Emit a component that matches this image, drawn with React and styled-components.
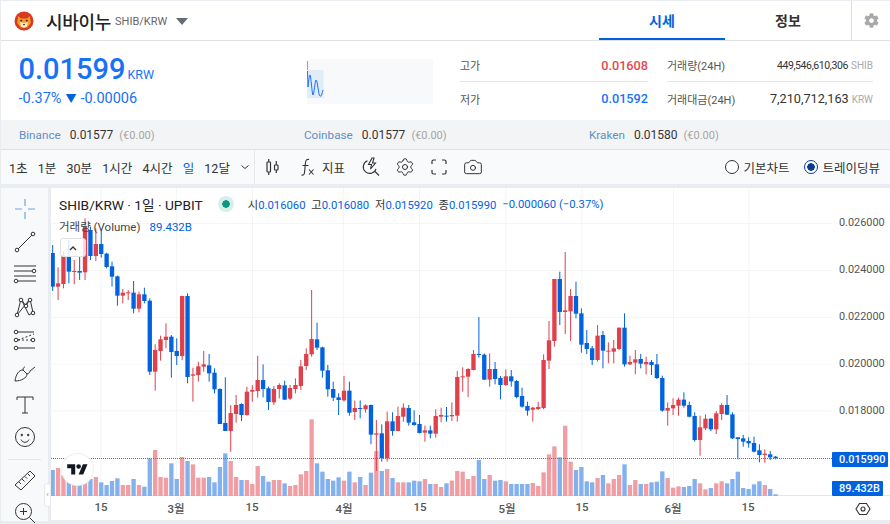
import React from "react";
import styled, { createGlobalStyle } from "styled-components";
import { Settings, Camera } from "lucide-react";
import { FaCog } from "react-icons/fa";

const GlobalStyle = createGlobalStyle`
  html, body { margin: 0; padding: 0; background: #fff; overflow: hidden; }
  * { box-sizing: border-box; }
  body { font-family: Roboto, "Noto Sans CJK KR", sans-serif; color: #333; }
`;

const BLUE = "#0062df";
const RED = "#e0404a";

// [red?, wickTop, bodyTop, bodyBottom, wickBottom, volumeTop]
const candles = [
  [0,180,204,305,318,855],[1,247,295,305,345,849],[1,200,212,297,310,870],[0,165,215,260,295,890],
  [1,225,258,261,298,900],[0,215,258,263,285,900],[1,100,125,262,285,885],[0,125,135,213,225,882],
  [1,130,177,213,228,876],[0,135,177,207,218,892],[0,203,206,246,250,900],[0,230,244,275,305,888],
  [0,272,274,332,362,880],[1,312,323,332,355,900],[1,315,322,325,345,900],[0,288,323,371,385,882],
  [1,320,328,371,382,900],[0,308,328,348,355,905],[0,340,347,560,570,820],[1,478,495,560,617,795],
  [1,452,463,498,527,876],[1,415,455,465,490,878],[0,450,455,501,578,835],[0,460,498,513,540,882],
  [1,332,333,513,525,816],[0,325,333,576,595,828],[1,548,568,572,650,838],[1,530,544,570,590,878],
  [1,498,538,545,560,878],[0,507,541,565,590,876],[0,550,563,613,625,892],[0,610,612,717,717,846],
  [0,577,714,738,738,805],[1,660,684,738,800,828],[1,630,660,687,713,876],[0,655,657,690,708,885],
  [1,605,620,690,692,885],[1,600,615,620,650,897],[1,512,585,618,638,843],[0,538,585,612,637,873],
  [0,605,610,651,675,890],[1,603,612,652,660,885],[1,595,600,612,640,885],[0,587,601,644,645,895],
  [1,600,609,641,645,903],[1,580,600,612,625,900],[1,525,544,603,615,868],[1,490,507,543,555,858],
  [1,315,462,508,515,703],[0,413,463,488,495,835],[0,485,487,557,578,860],[0,540,556,613,635,882],
  [0,590,612,638,648,887],[0,625,637,645,690,877],[1,573,617,646,650,887],[0,590,617,683,692,860],
  [1,647,669,681,705,892],[0,646,669,671,700,876],[1,658,661,673,683,900],[0,659,660,749,778,863],
  [1,705,745,749,858,798],[0,718,745,820,830,858],[1,680,709,820,830,852],[0,682,709,738,752,879],
  [1,665,693,738,738,892],[1,655,668,695,710,892],[0,660,669,713,722,892],[0,676,712,720,722,887],
  [0,690,717,744,745,889],[1,722,736,743,770,882],[0,722,736,746,760,897],[1,673,693,746,758,897],
  [1,668,690,695,712,906],[0,666,692,695,710,895],[1,652,690,694,708,887],[1,558,576,692,710,858],
  [1,547,574,576,620,860],[1,550,552,575,636,882],[1,495,507,555,556,873],[0,396,507,510,518,825],
  [0,505,509,584,585,882],[1,505,552,584,605,870],[0,531,552,582,598,887],[0,573,579,600,643,885],
  [1,553,574,600,603,889],[0,555,574,589,605,897],[0,585,588,636,640,897],[0,608,633,665,668,897],
  [0,650,663,677,692,897],[1,665,668,674,710,894],[1,650,666,672,675,903],[1,508,525,669,673,862],
  [1,408,466,527,552,808],[1,282,282,468,485,784],[0,260,282,381,420,817],[1,201,376,381,447,722],
  [1,312,333,379,468,830],[0,290,333,386,400,855],[0,370,385,479,503,846],[0,435,474,492,507,889],
  [0,483,490,525,540,892],[1,420,452,525,530,879],[0,438,450,497,550,870],[1,472,497,500,535,895],
  [1,465,490,500,535,882],[1,428,428,492,495,870],[0,385,428,538,545,838],[1,512,531,538,540,900],
  [1,495,523,533,568,885],[0,507,522,536,550,897],[1,515,531,538,568,897],[0,525,531,540,570,892],
  [0,507,538,579,582,890],[0,572,579,677,680,859],[1,652,669,677,722,879],[1,640,660,670,690,908],
  [1,638,644,662,692,904],[0,622,644,662,668,906],[0,650,660,695,697,903],[0,682,693,765,770,882],
  [1,692,727,765,812,895],[1,688,701,730,735,913],[0,700,701,733,738,909],[1,678,685,733,747,895],
  [1,655,660,687,705,889],[0,630,660,689,690,895],[0,682,688,760,762,882],[0,757,757,762,823,860],
  [0,750,760,770,785,909],[0,757,768,775,788,912],[0,755,774,800,802,898],[0,778,796,810,832,889],
  [1,793,806,810,833,900],[0,798,808,817,825,912],[0,813,815,820,823,928],
];

const gridYs = [115, 256, 397, 537, 677];
const gridXs = [302, 529, 757, 1030, 1258, 1517, 1745, 2020, 2246];
const prices = ["0.026000", "0.024000", "0.022000", "0.020000", "0.018000"];
const timeLabels = [
  ["15", 50], ["3월", 125], ["15", 201], ["4월", 293], ["15", 369],
  ["5월", 456], ["15", 531], ["6월", 622], ["15", 697],
];
const intervals = ["1초", "1분", "30분", "1시간", "4시간", "일", "12달"];
const exchanges = [
  ["Binance", "0.01577"],
  ["Coinbase", "0.01577"],
  ["Kraken", "0.01580"],
];

const Page = styled.div`
  width: 890px;
  height: 524px;
  display: flex;
  flex-direction: column;
  background: #e9ecf1;
  padding: 1px 0 0 1px;
  overflow: hidden;
`;

const Header = styled.header`
  height: 40px;
  display: flex;
  align-items: center;
  background: #fff;
  border-bottom: 1px solid #dfe1e5;
  flex: none;
`;

const Brand = styled.div`
  display: flex;
  align-items: center;
  width: 598px;
  padding-left: 13px;
  flex: none;
`;

const CoinName = styled.span`
  margin-left: 12px;
  font-size: 18px;
  font-weight: 500;
  letter-spacing: -0.3px;
  color: #222;
`;

const Pair = styled.span`
  margin-left: 4px;
  margin-top: 1px;
  font-size: 11px;
  color: #666;
`;

const Caret = styled.span`
  margin-left: 9px;
  margin-top: 2px;
  border-left: 6px solid transparent;
  border-right: 6px solid transparent;
  border-top: 7px solid #666b75;
`;

const Tab = styled.div`
  width: 126px;
  height: 39px;
  display: flex;
  align-items: center;
  justify-content: center;
  font-size: 14px;
  font-weight: 700;
  color: ${(p) => (p.$active ? BLUE : "#333")};
  border-bottom: 2px solid ${(p) => (p.$active ? BLUE : "transparent")};
`;

const GearCell = styled.div`
  width: 39px;
  height: 39px;
  display: flex;
  align-items: center;
  justify-content: center;
  border-left: 1px solid #dfe1e5;
  color: #a9a9a9;
`;

const Summary = styled.section`
  height: 79px;
  display: flex;
  background: #fff;
  flex: none;
`;

const PriceBlock = styled.div`
  width: 306px;
  padding: 9px 0 0 17.5px;
  flex: none;
`;

const MainPrice = styled.div`
  display: flex;
  align-items: baseline;
  color: #1772f8;
  font-size: 29px;
  font-weight: 500;
  line-height: 38px;
  span {
    font-size: 12.5px;
    font-weight: 400;
    margin-left: 2px;
  }
`;

const Change = styled.div`
  margin-top: -4px;
  font-size: 14.5px;
  line-height: 18px;
  color: #1772f8;
  b {
    font-weight: 400;
    font-size: 11px;
    color: ${BLUE};
    margin: 0 4px;
  }
`;

const Spark = styled.div`
  width: 126px;
  height: 45px;
  margin-top: 18px;
  background: #f8f9fb;
  flex: none;
  svg { display: block; }
`;

const Stats = styled.div`
  display: grid;
  grid-template-columns: 188px 206px;
  column-gap: 19px;
  margin: 8px 0 0 27px;
  align-content: start;
`;

const StatRow = styled.div`
  height: 33px;
  display: flex;
  align-items: center;
  justify-content: space-between;
  border-bottom: ${(p) => (p.$line ? "1px solid #e4e6ea" : "none")};
  font-size: 11px;
  color: #555;
`;

const StatValue = styled.span`
  font-size: ${(p) => p.$size || 12.7}px;
  font-weight: ${(p) => (p.$color ? 500 : 400)};
  color: ${(p) => p.$color || "#333"};
  letter-spacing: ${(p) => (p.$size ? "-0.4px" : "0")};
`;

const Unit = styled.small`
  margin-left: 3px;
  font-size: 10px;
  color: #aaa;
`;

const ExchangeBar = styled.div`
  height: 30px;
  display: flex;
  align-items: center;
  padding-left: 18px;
  background: #f3f4f6;
  border-bottom: 1px solid #dfe1e5;
  flex: none;
`;

const Exchange = styled.div`
  width: 285px;
  display: flex;
  align-items: baseline;
  gap: 9px;
  font-size: 12px;
`;

const ExName = styled.span`
  color: #5f8fc6;
  font-size: 11.7px;
`;

const ExValue = styled.span`
  color: #333;
`;

const ExDiff = styled.span`
  color: #a5a5a5;
  font-size: 11px;
  margin-left: -3px;
`;

const Toolbar = styled.div`
  height: 34px;
  display: flex;
  align-items: center;
  background: #f9fafc;
  flex: none;
`;

const Intervals = styled.div`
  width: 254px;
  height: 100%;
  display: flex;
  align-items: center;
  gap: 10.2px;
  padding-left: 8px;
  border-right: 1px solid #e6e8ec;
  white-space: nowrap;
  flex: none;
`;

const Interval = styled.span`
  font-size: 12.5px;
  color: ${(p) => (p.$active ? BLUE : "#333")};
`;

const ToolIcons = styled.div`
  display: flex;
  align-items: center;
  padding-left: 10px;
  color: #333;
  flex: 1;
`;

const ToolSlot = styled.span`
  display: flex;
  align-items: center;
  gap: ${(p) => p.$gap || 0}px;
  margin-right: ${(p) => p.$mr || 0}px;
  font-size: 12.5px;
`;

const ChartModes = styled.div`
  display: flex;
  align-items: center;
  gap: 15px;
  margin-right: 10px;
`;

const ChartMode = styled.label`
  display: flex;
  align-items: center;
  gap: 4px;
  font-size: 12.5px;
  color: #333;
`;

const Radio = styled.span`
  width: 14px;
  height: 14px;
  border-radius: 50%;
  border: 1.3px solid ${(p) => (p.$on ? "#0a3d91" : "#333")};
  background: ${(p) => (p.$on ? "radial-gradient(circle, #0a3d91 0 3.5px, #fff 4px)" : "#fff")};
`;

const ChartRegion = styled.div`
  margin-top: 4px;
  height: 333px;
  display: flex;
  flex: none;
`;

const DrawingTools = styled.aside`
  position: relative;
  width: 47px;
  background: #f8f9fb;
  display: flex;
  flex-direction: column;
  align-items: center;
  flex: none;
  color: #333;
  padding-top: 5px;
`;

const ToolButton = styled.span`
  height: 32.6px;
  display: flex;
  align-items: center;
  justify-content: center;
  flex: none;
  color: ${(p) => p.$color || "inherit"};
`;

const ToolDivider = styled.hr`
  width: 33px;
  margin: 5px 0 4px;
  border: 0;
  border-top: 1px solid #e3e5e9;
  flex: none;
`;

const HideTab = styled.button`
  position: absolute;
  right: -3px;
  top: 295px;
  width: 7px;
  height: 24px;
  padding: 0;
  border: 1px solid #e6e8ec;
  border-radius: 3px;
  background: #fff;
  color: #999;
  font-size: 8px;
  line-height: 20px;
`;

const ChartPane = styled.div`
  margin-left: 3px;
  width: 839px;
  background: #fff;
  display: grid;
  grid-template-columns: 781px 58px;
  grid-template-rows: 308px 25px;
  border-bottom: 1px solid #e9ecf1;
`;

const Plot = styled.div`
  position: relative;
  border-bottom: 1px solid #e3e5e9;
  svg { display: block; }
`;

const Legend = styled.div`
  position: absolute;
  left: 8px;
  top: 6px;
  display: flex;
  align-items: center;
  font-size: 11.3px;
  color: #333;
  white-space: nowrap;
`;

const LegendTitle = styled.span`
  font-size: 13.7px;
  color: #222;
`;

const StatusDot = styled.span`
  width: 16px;
  height: 16px;
  margin: 0 14px 0 15px;
  border-radius: 50%;
  background: radial-gradient(circle, #089981 0 3.5px, #d7efe9 4px);
`;

const Ohlc = styled.span`
  margin-right: 5.8px;
  b {
    font-weight: 400;
    color: ${BLUE};
  }
`;

const VolumeLegend = styled.div`
  position: absolute;
  left: 8px;
  top: 30px;
  font-size: 11.5px;
  color: #444;
  b {
    font-weight: 400;
    color: ${BLUE};
    margin-left: 9px;
  }
`;

const CollapseButton = styled.div`
  position: absolute;
  left: 9px;
  top: 50px;
  width: 26px;
  height: 19px;
  display: flex;
  align-items: center;
  justify-content: center;
  border: 1px solid #dfe1e5;
  border-radius: 3px;
  background: rgba(255, 255, 255, 0.8);
`;

const TvBadge = styled.div`
  position: absolute;
  left: 11px;
  top: 266px;
  width: 31px;
  height: 31px;
  border-radius: 50%;
  display: flex;
  align-items: center;
  justify-content: center;
  background: #fff;
  box-shadow: 0 0 0 1px #eceef1;
`;

const PriceAxis = styled.div`
  position: relative;
  padding-top: 11.5px;
  border-bottom: 1px solid #e3e5e9;
`;

const PriceLabel = styled.div`
  height: 46.85px;
  padding-left: 7px;
  display: flex;
  align-items: center;
  font-size: 10.9px;
  color: #555;
`;

const PriceTag = styled.div`
  position: absolute;
  left: 0;
  top: ${(p) => p.$top}px;
  width: ${(p) => p.$w}px;
  height: 15px;
  padding-left: 7px;
  display: flex;
  align-items: center;
  border-radius: 1px;
  background: ${BLUE};
  color: #fff;
  font-size: 10.9px;
  font-weight: 500;
`;

const TimeAxis = styled.div`
  position: relative;
`;

const TimeLabel = styled.span`
  position: absolute;
  left: ${(p) => p.$x}px;
  top: 4px;
  transform: translateX(-50%);
  font-size: 11.5px;
  font-weight: 500;
  color: #555;
`;

const AxisCorner = styled.div`
  display: flex;
  align-items: center;
  justify-content: center;
  padding-left: 4px;
`;

const Ico = ({ w = 22, h = 22, sw = 1, children }) => (
  <svg width={w} height={h} viewBox={`0 0 ${w} ${h}`} fill="none" stroke="currentColor" strokeWidth={sw}>
    {children}
  </svg>
);

const Node = ({ x, y }) => <circle cx={x} cy={y} r="1.8" fill="#f8f9fb" />;

const ShibaLogo = () => (
  <svg width="20" height="20" viewBox="0 0 20 20">
    <circle cx="10" cy="10" r="9.5" fill="#d8391e" />
    <path d="M4 5l3 2.5h6L16 5l.8 7-3.3 4.5h-7L3.2 12z" fill="#f49a2a" />
    <path d="M6 11l4 1 4-1-1 4.5-3 1.5-3-1.5z" fill="#fbe6c8" />
    <circle cx="7.2" cy="9.6" r=".9" fill="#2a1a10" />
    <circle cx="12.8" cy="9.6" r=".9" fill="#2a1a10" />
    <path d="M8.8 13h2.4L10 14.4z" fill="#2a1a10" />
  </svg>
);

const Sparkline = () => (
  <svg width="126" height="45" viewBox="0 0 126 45">
    <rect x="0" y="11" width="16.500" height="28" fill="#e1ecf9" />
    <rect x="0" y="2" width="1" height="9" fill="#e0808a" />
    <path
      d="M.5 12L1 28C1.500 24 2.200 16 3 16C4 16 5 36 6 36C7 36 8 21 9 21C10.500 21 11.500 37 13 37C14.500 38 15.500 33 16 31"
      fill="none"
      stroke="#1772f8"
      strokeWidth="1"
    />
  </svg>
);

const CandleChart = () => (
  <svg width="781" height="308" viewBox="153 9 2343 924">
    {gridYs.map((y) => (
      <rect key={y} x="153" y={y - 1} width="2343" height="3" fill="#f4f5f7" />
    ))}
    {gridXs.map((x) => (
      <rect key={x} x={x - 1} y="9" width="3" height="924" fill="#f4f5f7" />
    ))}
    {candles.map((c, i) => {
      const x = 158 + 16.185 * i;
      return (
        <rect
          key={i}
          x={x - 6.5}
          y={c[5]}
          width="13"
          height={934 - c[5]}
          fill={c[0] ? "#f09ea3" : "#82b1ee"}
        />
      );
    })}
    {candles.map((c, i) => {
      const x = 158 + 16.185 * i;
      const color = c[0] ? RED : BLUE;
      return (
        <g key={i} fill={color}>
          <rect x={x - 1.5} y={c[1]} width="3" height={c[4] - c[1]} />
          <rect x={x - 6.5} y={c[2]} width="13" height={Math.max(c[3] - c[2], 3)} />
        </g>
      );
    })}
    <line x1="153" y1="820.5" x2="2496" y2="820.5" stroke="#2f7de6" strokeWidth="3" strokeDasharray="3 3" />
  </svg>
);

const App = () => (
  <>
    <GlobalStyle />
    <Page>
      <Header>
        <Brand>
          <ShibaLogo />
          <CoinName>시바이누</CoinName>
          <Pair>SHIB/KRW</Pair>
          <Caret />
        </Brand>
        <Tab $active>시세</Tab>
        <Tab>정보</Tab>
        <GearCell>
          <FaCog size={15} />
        </GearCell>
      </Header>

      <Summary>
        <PriceBlock>
          <MainPrice>
            0.01599<span>KRW</span>
          </MainPrice>
          <Change>
            -0.37%<b>▼</b>-0.00006
          </Change>
        </PriceBlock>
        <Spark>
          <Sparkline />
        </Spark>
        <Stats>
          <StatRow $line>
            고가<StatValue $color="#e34850">0.01608</StatValue>
          </StatRow>
          <StatRow $line>
            거래량(24H)
            <span>
              <StatValue $size={10.5}>449,546,610,306</StatValue>
              <Unit>SHIB</Unit>
            </span>
          </StatRow>
          <StatRow>
            저가<StatValue $color="#1772f8">0.01592</StatValue>
          </StatRow>
          <StatRow>
            거래대금(24H)
            <span>
              <StatValue>7,210,712,163</StatValue>
              <Unit>KRW</Unit>
            </span>
          </StatRow>
        </Stats>
      </Summary>

      <ExchangeBar>
        {exchanges.map(([name, value]) => (
          <Exchange key={name}>
            <ExName>{name}</ExName>
            <ExValue>{value}</ExValue>
            <ExDiff>(€0.00)</ExDiff>
          </Exchange>
        ))}
      </ExchangeBar>

      <Toolbar>
        <Intervals>
          {intervals.map((t) => (
            <Interval key={t} $active={t === "일"}>
              {t}
            </Interval>
          ))}
          <Ico w={10} h={10} sw={1}>
            <path d="M1.500 3.500L5 6.500l3.500-3" />
          </Ico>
        </Intervals>
        <ToolIcons>
          <ToolSlot $mr={19}>
            <Ico w={16} h={20} sw={1.2}>
              <rect x="2" y="5" width="3.500" height="10" rx=".8" />
              <path d="M3.750 2v3M3.750 15v3M11.250 4v4M11.250 13v3" />
              <rect x="9.500" y="8" width="3.500" height="5" rx=".8" />
            </Ico>
          </ToolSlot>
          <ToolSlot $gap={6} $mr={16}>
            <Ico w={16} h={20} sw={1.1}>
              <path d="M1.500 18c2 .5 2.800-.5 3-2.500l1-10C5.800 3 7 2 9 2.500M2.500 8.500h6M9 12.500l4.500 5M13.500 12.500l-4.500 5" />
            </Ico>
            지표
          </ToolSlot>
          <ToolSlot $mr={14}>
            <Ico w={20} h={20} sw={1.1}>
              <path d="M6.500 3.800a6.500 6.500 0 1 0 8.500 8M13.500 14l4.500 4.500" />
              <path d="M11 1L7.500 7.500h3L9.500 12l5-6h-3L13 1z" />
            </Ico>
          </ToolSlot>
          <ToolSlot $mr={14}>
            <Settings size={20} strokeWidth={1.2} />
          </ToolSlot>
          <ToolSlot $mr={14}>
            <Ico w={20} h={20} sw={1.2}>
              <path d="M3 7V4.500A1.500 1.500 0 0 1 4.500 3H7M13 3h2.500A1.500 1.500 0 0 1 17 4.500V7M17 13v2.500a1.500 1.500 0 0 1-1.500 1.500H13M7 17H4.500A1.500 1.500 0 0 1 3 15.500V13" />
            </Ico>
          </ToolSlot>
          <Camera size={20} strokeWidth={1.2} />
        </ToolIcons>
        <ChartModes>
          <ChartMode>
            <Radio />
            기본차트
          </ChartMode>
          <ChartMode>
            <Radio $on />
            트레이딩뷰
          </ChartMode>
        </ChartModes>
      </Toolbar>

      <ChartRegion>
        <DrawingTools>
          <ToolButton $color="#6ba6f0">
            <Ico sw={1.2}>
              <path d="M11 1v7M11 14v7M1 11h7M14 11h7" />
            </Ico>
          </ToolButton>
          <ToolButton>
            <Ico>
              <path d="M3.500 18.500L18.500 3.500" />
              <Node x={3} y={19} />
              <Node x={19} y={3} />
            </Ico>
          </ToolButton>
          <ToolButton>
            <Ico w={24} h={22}>
              <path d="M1 3h22M1 8h20M1 13h22M5 18h18" />
              <Node x={21} y={8} />
              <Node x={3} y={18} />
            </Ico>
          </ToolButton>
          <ToolButton>
            <Ico>
              <path d="M3 19L7 3l8 16 4-2.500L16 3 3 19M7 3l5 7M16 3l-4 7" />
              <Node x={3} y={19} />
              <Node x={7} y={4} />
              <Node x={12} y={10} />
              <Node x={16} y={4} />
              <Node x={19} y={17} />
            </Ico>
          </ToolButton>
          <ToolButton>
            <Ico w={24} h={22}>
              <path d="M5 3h16M5 19h17" />
              <path d="M5 11l16-6M5 11h16" strokeDasharray="2 2" />
              <Node x={3} y={3} />
              <Node x={3} y={11} />
              <Node x={3} y={19} />
              <Node x={20} y={11} />
            </Ico>
          </ToolButton>
          <ToolButton>
            <Ico w={24} h={22}>
              <path d="M2 20C3 13 6 9 10 9l4 4c0 4-6 7-12 7zM10 9c0-2 1-3 2-3M14 13c2-.5 3-2 3-3l5-4" />
            </Ico>
          </ToolButton>
          <ToolButton>
            <Ico>
              <path d="M3 6V3h16v3M11 3v16M8 19h6" />
            </Ico>
          </ToolButton>
          <ToolButton>
            <Ico>
              <circle cx="11" cy="11" r="9.500" />
              <circle cx="7.800" cy="9" r=".8" fill="currentColor" />
              <circle cx="14.200" cy="9" r=".8" fill="currentColor" />
              <path d="M7 13.500c1 2 2.500 2.800 4 2.800s3-.8 4-2.800" />
            </Ico>
          </ToolButton>
          <ToolDivider />
          <ToolButton>
            <Ico w={24} h={24}>
              <path d="M2 17L17 3l5 5L8 22z" />
              <path d="M6 14l2 2M9 11l2.500 2.500M12 8.500l2 2M15 6l2 2" />
            </Ico>
          </ToolButton>
          <ToolButton>
            <Ico>
              <circle cx="9.500" cy="9.500" r="8" />
              <path d="M15.500 15.500l5.500 5.500M9.500 6v7M6 9.500h7" />
            </Ico>
          </ToolButton>
          <HideTab>‹</HideTab>
        </DrawingTools>

        <ChartPane>
          <Plot>
            <CandleChart />
            <Legend>
              <LegendTitle>SHIB/KRW · 1일 · UPBIT</LegendTitle>
              <StatusDot />
              <Ohlc>시<b>0.016060</b></Ohlc>
              <Ohlc>고<b>0.016080</b></Ohlc>
              <Ohlc>저<b>0.015920</b></Ohlc>
              <Ohlc>종<b>0.015990</b></Ohlc>
              <Ohlc><b>−0.000060 (−0.37%)</b></Ohlc>
            </Legend>
            <VolumeLegend>
              거래량 (Volume)<b>89.432B</b>
            </VolumeLegend>
            <CollapseButton>
              <Ico w={10} h={8} sw={1.3}>
                <path d="M2 6l3-3 3 3" />
              </Ico>
            </CollapseButton>
            <TvBadge>
              <svg width="21" height="16" viewBox="0 0 36 28" fill="#131722">
                <path d="M14 22H7V11H0V4h14v18zM28 22h-8l7.500-18h8L28 22z" />
                <circle cx="20" cy="8" r="4" />
              </svg>
            </TvBadge>
          </Plot>
          <PriceAxis>
            {prices.map((p) => (
              <PriceLabel key={p}>{p}</PriceLabel>
            ))}
            <PriceTag $top={263.5} $w={56}>0.015990</PriceTag>
            <PriceTag $top={293} $w={51}>89.432B</PriceTag>
          </PriceAxis>
          <TimeAxis>
            {timeLabels.map(([t, x]) => (
              <TimeLabel key={x} $x={x}>{t}</TimeLabel>
            ))}
          </TimeAxis>
          <AxisCorner>
            <Ico w={16} h={16} sw={1.1}>
              <path d="M4.500 2.500h7L15 8l-3.500 5.500h-7L1 8z" />
              <circle cx="8" cy="8" r="2" />
            </Ico>
          </AxisCorner>
        </ChartPane>
      </ChartRegion>
    </Page>
  </>
);

export default App;
